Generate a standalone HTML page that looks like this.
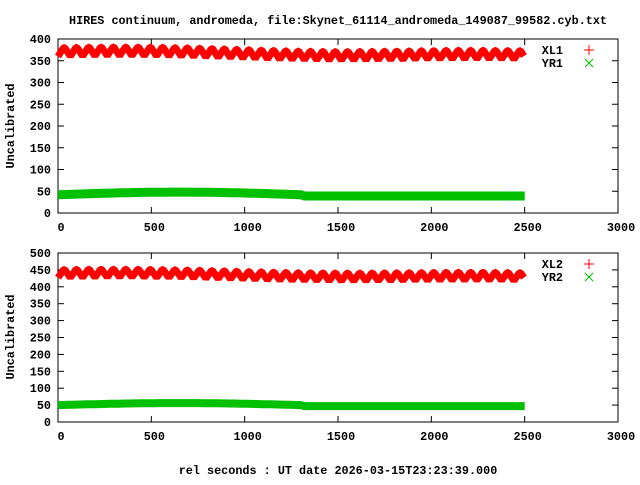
<!DOCTYPE html>
<html><head><meta charset="utf-8"><style>
body{margin:0;background:#fff;width:640px;height:480px;overflow:hidden}
svg text{font-family:"Liberation Mono",monospace;font-weight:bold;font-size:11.8px;fill:#000}
</style></head><body>
<svg id="s" width="640" height="480" xmlns="http://www.w3.org/2000/svg">
<rect width="640" height="480" fill="#fff"/>
<text x="338" y="24" text-anchor="middle">HIRES continuum, andromeda, file:Skynet_61114_andromeda_149087_99582.cyb.txt</text>
<text x="338" y="474" text-anchor="middle">rel seconds : UT date 2026-03-15T23:23:39.000</text>
<text transform="translate(14,126) rotate(-90)" text-anchor="middle">Uncalibrated</text>
<text transform="translate(14,337) rotate(-90)" text-anchor="middle">Uncalibrated</text>
<g id="g"></g>
</svg>
<script>
var g=document.getElementById('g'),h='';
function P(t){h+=t;}
function panel(top,bot,ymax){
 var L=58,R=618,sc=(bot-top)/ymax;
 P('<rect x="'+L+'" y="'+top+'" width="'+(R-L)+'" height="'+(bot-top)+'" fill="none" stroke="#000" stroke-width="1"/>');
 for(var v=0;v<=ymax;v+=50){var y=bot-v*sc;
  P('<line x1="'+L+'" x2="'+(L+6)+'" y1="'+y+'" y2="'+y+'" stroke="#000"/><line x1="'+(R-6)+'" x2="'+R+'" y1="'+y+'" y2="'+y+'" stroke="#000"/>');
  P('<text x="51" y="'+(y+4)+'" text-anchor="end">'+v+'</text>');}
 for(var s=0;s<=3000;s+=500){var x=L+s*(R-L)/3000;
  P('<line x1="'+x+'" x2="'+x+'" y1="'+bot+'" y2="'+(bot-6)+'" stroke="#000"/><line x1="'+x+'" x2="'+x+'" y1="'+top+'" y2="'+(top+6)+'" stroke="#000"/>');
  P('<text x="'+(x+3)+'" y="'+(bot+18)+'" text-anchor="middle">'+s+'</text>');}
 return sc;
}
function zig(bot,sc,c0,amp,trend,w){
 var L=58,k=(618-58)/3000,d='';
 for(var s=0;s<=2500;s+=6){
  var ph=(s%66)/66, tri=ph<0.5?ph*4-1:3-ph*4;
  var v=c0+amp*tri+trend*s/2500+3*Math.sin(s/300);
  d+=(s?'L':'M')+(L+s*k).toFixed(1)+','+(bot-v*sc).toFixed(1);}
 P('<path d="'+d+'" fill="none" stroke="#ff0000" stroke-width="'+w+'" stroke-linejoin="bevel"/>');
}
function band(bot,sc,f,w){
 var L=58,k=(618-58)/3000,d='';
 for(var s=0;s<=2500;s+=20){d+=(s?'L':'M')+(L+s*k).toFixed(1)+','+(bot-f(s)*sc).toFixed(1);}
 P('<path d="'+d+'" fill="none" stroke="#00c000" stroke-width="'+w+'"/>');
}
var sc1=panel(39,213,400);
zig(213,sc1,371,11,-10,7);
band(213,sc1,function(s){return 42+6*Math.sin(Math.PI*Math.min(s,1300)/1300)-(s>1300?3:0);},9);
var sc2=panel(253,422,500);
zig(422,sc2,440,13,-12,7);
band(422,sc2,function(s){return 50+6*Math.sin(Math.PI*Math.min(s,1300)/1300)-(s>1300?3:0);},8);
function leg(y,l,cross,col){
 P('<text x="563" y="'+(y+4)+'" text-anchor="end">'+l+'</text>');
 if(cross)P('<path d="M585,'+(y-4)+'L593,'+(y+4)+'M585,'+(y+4)+'L593,'+(y-4)+'" stroke="'+col+'"/>');
 else P('<path d="M584,'+y+'H594M589,'+(y-5)+'V'+(y+5)+'" stroke="'+col+'"/>');
}
leg(50,'XL1',0,'#ff0000');leg(63,'YR1',1,'#00c000');
leg(264,'XL2',0,'#ff0000');leg(277,'YR2',1,'#00c000');
g.innerHTML=h;
</script>
</body></html>
